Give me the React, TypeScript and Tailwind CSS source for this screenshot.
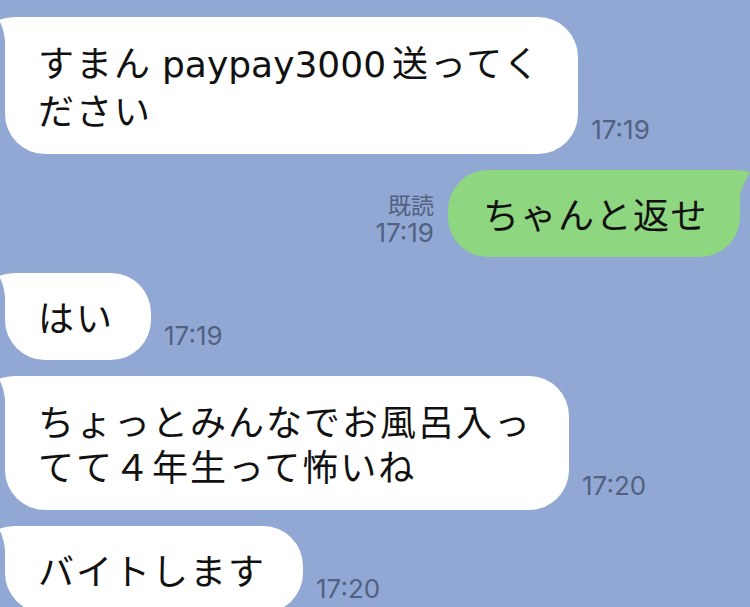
import React from 'react'

const jp = { fontFamily: '"Noto Sans CJK JP", "Noto Sans", sans-serif' }
const num = { fontFamily: 'Inter, "Noto Sans", sans-serif' }
const latin = { fontFamily: '"DejaVu Sans", "Noto Sans", sans-serif' }

function LeftTail() {
  return (
    <svg
      className="absolute -left-[6px] top-0"
      width="46"
      height="46"
      viewBox="0 0 46 46"
    >
      <path d="M46 0 H16 Q7 0 0 3 Q5 12 6 24 V46 H46 Z" fill="#ffffff" />
    </svg>
  )
}

function RightTail() {
  return (
    <svg
      className="absolute -right-[10px] top-0"
      width="50"
      height="46"
      viewBox="0 0 50 46"
    >
      <path d="M0 0 H34 Q43 0 50 2 Q44 12 40 24 V46 H0 Z" fill="#8fd680" />
    </svg>
  )
}

function Time({ children }: { children: React.ReactNode }) {
  return (
    <div style={num} className="mb-[10px] text-[26px] leading-[28px] text-[#51617f]">
      {children}
    </div>
  )
}

function Incoming({
  lines,
  time,
  multi,
}: {
  lines: React.ReactNode[]
  time: string
  multi?: boolean
}) {
  return (
    <div className="flex items-end gap-[13px] pl-[5px]">
      <div
        style={jp}
        className={`relative rounded-[40px] bg-white pl-[33px] pr-[37px] text-[36px] leading-[45px] tracking-[2px] text-[#111] ${
          multi ? 'py-[22px]' : 'py-[21px]'
        }`}
      >
        <LeftTail />
        <div className="relative">
          {lines.map((l, i) => (
            <div key={i}>{l}</div>
          ))}
        </div>
      </div>
      <Time>{time}</Time>
    </div>
  )
}

export default function App() {
  return (
    <div className="flex h-[607px] w-[750px] flex-col gap-4 overflow-hidden bg-[#91a8d4] pt-[17px]">
      <Incoming
        lines={[
          <>
            すまん
            <span style={latin} className="ml-[10px] mr-[6px] tracking-normal">
              paypay3000
            </span>
            送ってく
          </>,
          'ださい',
        ]}
        time="17:19"
        multi
      />

      <div className="flex items-end justify-end gap-[14px] pr-[10px]">
        <div className="mb-[10px] flex flex-col items-end">
          <div style={jp} className="text-[23px] leading-[30px] text-[#51617f]">
            既読
          </div>
          <div style={num} className="text-[26px] leading-[28px] text-[#51617f]">
            17:19
          </div>
        </div>
        <div
          style={jp}
          className="relative rounded-[40px] bg-[#8fd680] py-[21px] pl-[35px] pr-[32px] text-[36px] leading-[45px] tracking-[1.5px] text-[#111]"
        >
          <RightTail />
          <div className="relative">ちゃんと返せ</div>
        </div>
      </div>

      <Incoming lines={['はい']} time="17:19" />

      <Incoming
        lines={['ちょっとみんなでお風呂入っ', 'てて４年生って怖いね']}
        time="17:20"
        multi
      />

      <Incoming lines={['バイトします']} time="17:20" />
    </div>
  )
}
